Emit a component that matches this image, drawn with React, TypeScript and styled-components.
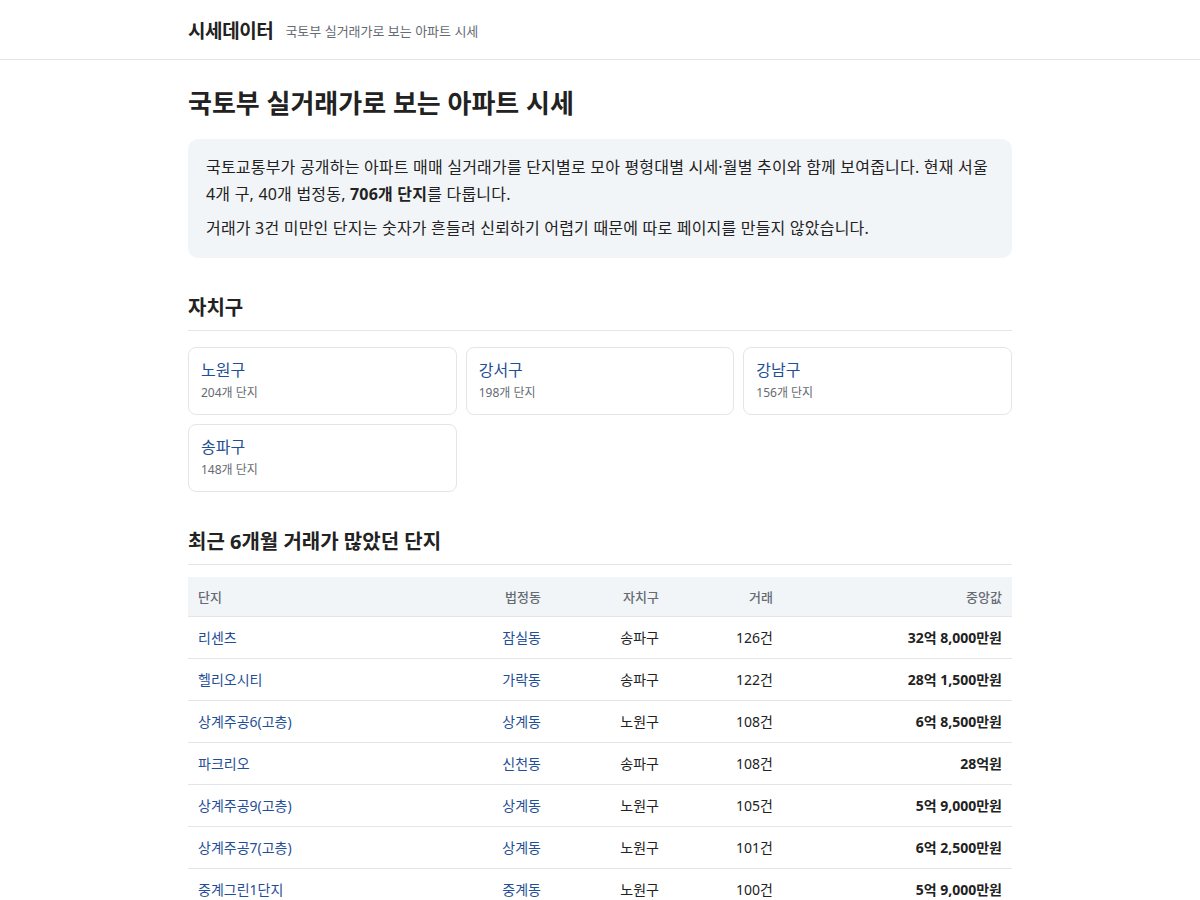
import React from "react";
import styled, { createGlobalStyle } from "styled-components";

// GLOBAL

const GlobalStyle = createGlobalStyle`
    * {
        box-sizing: border-box;
    }
    body {
        margin: 0;
        background: #ffffff;
        color: #222222;
        font-family: "Noto Sans", "Noto Sans CJK KR", sans-serif;
        word-break: keep-all;
    }
`;

const Colors = {
    text: "#222222",
    muted: "#666b73",
    link: "#1f4f96",
    line: "#e3e5e8",
    panel: "#f2f5f8",
};

// STYLED COMPONENTS

const Header = styled.header`
    height: 60px;
    border-bottom: 1px solid ${Colors.line};
`;

const Inner = styled.div`
    width: 824px;
    margin: 0 auto;
`;

const HeaderInner = styled(Inner)`
    height: 100%;
    display: flex;
    align-items: center;
    gap: 12px;
`;

const Logo = styled.a`
    font-size: 19px;
    font-weight: 700;
    color: ${Colors.text};
    text-decoration: none;
    letter-spacing: -0.4px;
`;

const Tagline = styled.span`
    font-size: 13px;
    color: ${Colors.muted};
    padding-top: 2px;
`;

const Main = styled(Inner)`
    padding: 24px 0 40px;
`;

const Title = styled.h1`
    margin: 0 0 17px;
    font-size: 26px;
    line-height: 38px;
    font-weight: 700;
`;

const Intro = styled.div`
    background: ${Colors.panel};
    border-radius: 10px;
    padding: 15px 18px 16px;
    font-size: 16px;
    line-height: 27px;
    letter-spacing: 0.2px;

    p {
        margin: 0;
    }
    p + p {
        margin-top: 7px;
    }
`;

const SectionTitle = styled.h2`
    margin: 36px 0 16px;
    padding-bottom: 8px;
    border-bottom: 1px solid ${Colors.line};
    font-size: 20px;
    line-height: 28px;
    font-weight: 700;
`;

const DistrictGrid = styled.div`
    display: grid;
    grid-template-columns: repeat(3, 1fr);
    gap: 9px;
    margin-bottom: 35px;
`;

const DistrictCard = styled.a`
    display: flex;
    flex-direction: column;
    padding: 10px 12px 11px;
    border: 1px solid ${Colors.line};
    border-radius: 8px;
    text-decoration: none;
`;

const DistrictName = styled.span`
    font-size: 16px;
    line-height: 24px;
    color: ${Colors.link};
`;

const DistrictCount = styled.span`
    margin-top: 1px;
    font-size: 12px;
    line-height: 20px;
    color: ${Colors.muted};
`;

const Table = styled.table`
    width: 100%;
    border-collapse: collapse;
    table-layout: fixed;
    font-size: 14px;
    margin-top: -4px;
`;

const HeadCell = styled.th<{ $align?: string }>`
    background: ${Colors.panel};
    color: ${Colors.muted};
    font-weight: 500;
    font-size: 13px;
    height: 39px;
    padding: 0 10px;
    text-align: ${(p) => p.$align || "left"};
    border-bottom: 1px solid ${Colors.line};
`;

const Cell = styled.td<{ $align?: string; $strong?: boolean }>`
    height: 42px;
    padding: 0 10px;
    text-align: ${(p) => p.$align || "left"};
    font-weight: ${(p) => (p.$strong ? 700 : 400)};
    border-bottom: 1px solid ${Colors.line};
    color: ${Colors.text};
`;

const CellLink = styled.a`
    color: ${Colors.link};
    text-decoration: none;
`;

// DATA

const districts = [
    { name: "노원구", count: 204 },
    { name: "강서구", count: 198 },
    { name: "강남구", count: 156 },
    { name: "송파구", count: 148 },
];

const complexes = [
    { name: "리센츠", dong: "잠실동", gu: "송파구", deals: 126, price: "32억 8,000만원" },
    { name: "헬리오시티", dong: "가락동", gu: "송파구", deals: 122, price: "28억 1,500만원" },
    { name: "상계주공6(고층)", dong: "상계동", gu: "노원구", deals: 108, price: "6억 8,500만원" },
    { name: "파크리오", dong: "신천동", gu: "송파구", deals: 108, price: "28억원" },
    { name: "상계주공9(고층)", dong: "상계동", gu: "노원구", deals: 105, price: "5억 9,000만원" },
    { name: "상계주공7(고층)", dong: "상계동", gu: "노원구", deals: 101, price: "6억 2,500만원" },
    { name: "중계그린1단지", dong: "중계동", gu: "노원구", deals: 100, price: "5억 9,000만원" },
];

const App = () => {
    return (
        <>
            <GlobalStyle />
            <Header>
                <HeaderInner>
                    <Logo href="#">시세데이터</Logo>
                    <Tagline>국토부 실거래가로 보는 아파트 시세</Tagline>
                </HeaderInner>
            </Header>
            <Main>
                <Title>국토부 실거래가로 보는 아파트 시세</Title>
                <Intro>
                    <p>
                        국토교통부가 공개하는 아파트 매매 실거래가를 단지별로 모아 평형대별 시세·월별 추이와 함께
                        보여줍니다. 현재 서울 4개 구, 40개 법정동, <strong>706개 단지</strong>를 다룹니다.
                    </p>
                    <p>거래가 3건 미만인 단지는 숫자가 흔들려 신뢰하기 어렵기 때문에 따로 페이지를 만들지 않았습니다.</p>
                </Intro>

                <SectionTitle>자치구</SectionTitle>
                <DistrictGrid>
                    {districts.map((d) => (
                        <DistrictCard href="#" key={d.name}>
                            <DistrictName>{d.name}</DistrictName>
                            <DistrictCount>{d.count}개 단지</DistrictCount>
                        </DistrictCard>
                    ))}
                </DistrictGrid>

                <SectionTitle>최근 6개월 거래가 많았던 단지</SectionTitle>
                <Table>
                    <colgroup>
                        <col style={{ width: 253 }} />
                        <col style={{ width: 110 }} />
                        <col style={{ width: 118 }} />
                        <col style={{ width: 114 }} />
                        <col />
                    </colgroup>
                    <thead>
                        <tr>
                            <HeadCell>단지</HeadCell>
                            <HeadCell $align="right">법정동</HeadCell>
                            <HeadCell $align="right">자치구</HeadCell>
                            <HeadCell $align="right">거래</HeadCell>
                            <HeadCell $align="right">중앙값</HeadCell>
                        </tr>
                    </thead>
                    <tbody>
                        {complexes.map((c) => (
                            <tr key={c.name}>
                                <Cell>
                                    <CellLink href="#">{c.name}</CellLink>
                                </Cell>
                                <Cell $align="right">
                                    <CellLink href="#">{c.dong}</CellLink>
                                </Cell>
                                <Cell $align="right">{c.gu}</Cell>
                                <Cell $align="right">{c.deals}건</Cell>
                                <Cell $align="right" $strong>
                                    {c.price}
                                </Cell>
                            </tr>
                        ))}
                    </tbody>
                </Table>
            </Main>
        </>
    );
};

export default App;
